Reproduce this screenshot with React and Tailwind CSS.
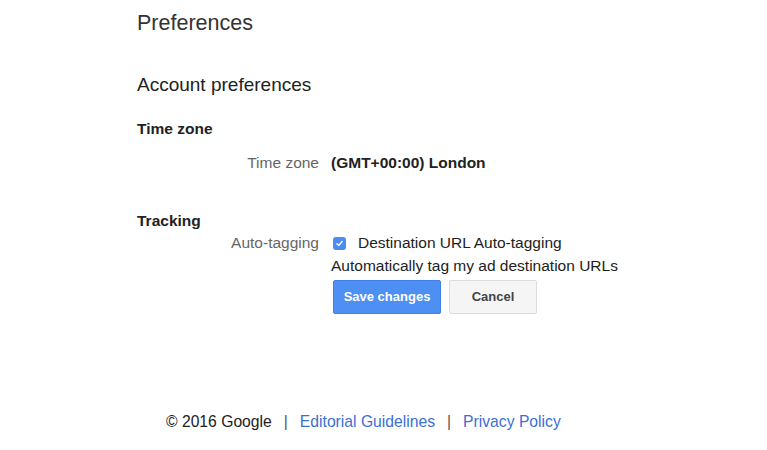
export default function App() {
  return (
    <div className="min-h-[450px] w-[767px] bg-white font-['Liberation_Sans',Arial,sans-serif] text-[#222]">
      <div className="pl-[137px] pt-[11px]">
        <h1 className="text-[21.5px] leading-[24px] text-[#333]">Preferences</h1>
        <h2 className="mt-[38px] text-[19px] leading-[24px] text-[#222]">Account preferences</h2>

        <h3 className="mt-[22px] text-[15.5px] font-bold leading-[20px]">Time zone</h3>
        <div className="mt-[14px] grid grid-cols-[182px_1fr] gap-x-[12px] text-[15.5px] leading-[20px]">
          <span className="text-right text-[#666]">Time zone</span>
          <span className="font-bold">(GMT+00:00) London</span>
        </div>

        <h3 className="mt-[38px] text-[15.5px] font-bold leading-[20px]">Tracking</h3>
        <div className="mt-[2px] grid grid-cols-[182px_1fr] gap-x-[12px] text-[15.5px] leading-[20px]">
          <span className="text-right text-[#666]">Auto-tagging</span>
          <div>
            <label className="flex items-center pl-[2px]">
              <span className="flex h-[13px] w-[13px] items-center justify-center rounded-[3px] bg-[#4a8cf0]">
                <svg viewBox="0 0 12 12" className="h-[9px] w-[9px]">
                  <path d="M2.5 6.3 L5 8.6 L9.5 3.3" fill="none" stroke="white" strokeWidth="1.8" strokeLinecap="round" strokeLinejoin="round" />
                </svg>
              </span>
              <span className="ml-[12px]">Destination URL Auto-tagging</span>
            </label>
            <p className="mt-[3px]">Automatically tag my ad destination URLs</p>
            <div className="mt-[4px] flex gap-[8px] pl-[2px]">
              <button className="h-[34px] w-[108px] rounded-[2px] border border-[#3f80ea] bg-[#4d8ff2] text-[13px] font-bold text-white">
                Save changes
              </button>
              <button className="h-[34px] w-[88px] rounded-[2px] border border-[#dcdcdc] bg-[#f5f5f5] text-[13px] font-bold text-[#444]">
                Cancel
              </button>
            </div>
          </div>
        </div>
      </div>

      <footer className="mt-[98px] flex items-center pl-[166px] text-[15.7px] leading-[20px]">
        <span className="text-[#222]">© 2016 Google</span>
        <span className="mx-[12px] text-[#555]">|</span>
        <a className="text-[#3b6fd6]">Editorial Guidelines</a>
        <span className="mx-[12px] text-[#555]">|</span>
        <a className="text-[#3b6fd6]">Privacy Policy</a>
      </footer>
    </div>
  );
}
